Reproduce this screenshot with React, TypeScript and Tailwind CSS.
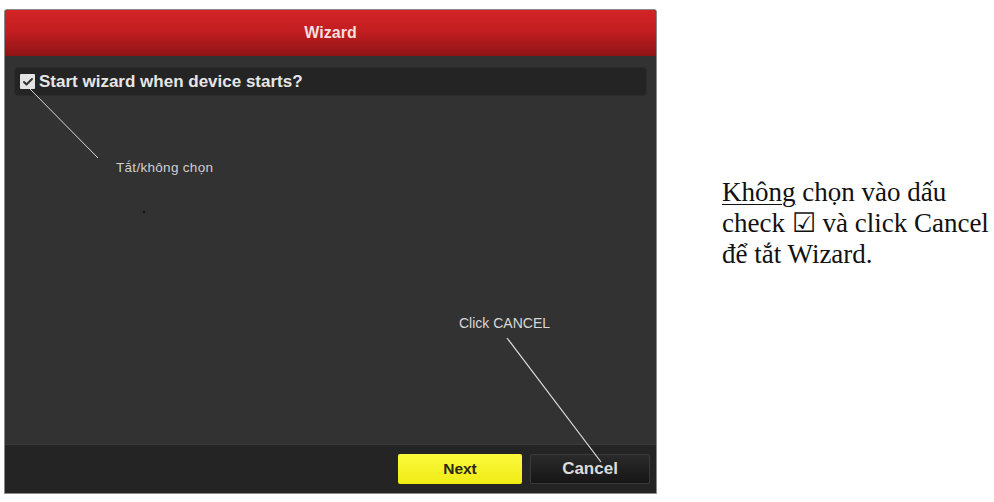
import { Check } from 'lucide-react';

export default function App() {
  return (
    <div className="w-[994px] h-[502px] bg-white flex relative overflow-hidden">
      {/* wizard dialog */}
      <div className="ml-[4px] mt-[9px] w-[653px] h-[485px] flex flex-col bg-[#303030] border border-[#8a8a8a] rounded-t-[3px] relative font-['Liberation_Sans',Arial,sans-serif]">
        <div className="h-[46px] shrink-0 flex items-center justify-center bg-gradient-to-b from-[#d42426] via-[#c01d20] to-[#8e1416] rounded-t-[3px]">
          <span className="text-[16px] font-bold text-[#f4dede]">Wizard</span>
        </div>
        <div className="flex-1 px-[9px] pt-[11px] bg-[#323232]">
          <div className="h-[29px] flex items-center gap-[4px] px-[5px] bg-[#242424] rounded-[4px] border border-[#2c2c2c]">
            <span className="w-[15px] h-[15px] flex items-center justify-center bg-[#e4e4e4] rounded-[1px]">
              <Check size={12} strokeWidth={4} className="text-[#333]" />
            </span>
            <span className="text-[17px] font-bold text-[#e6e6e6]">Start wizard when device starts?</span>
          </div>
        </div>
        <div className="h-[49px] shrink-0 flex items-center justify-end gap-[8px] pr-[6px] bg-[#242424] border-t border-[#3a3a3a]">
          <button className="w-[124px] h-[30px] bg-gradient-to-b from-[#fbf83a] to-[#f0ec10] text-[15.5px] font-bold text-[#2a2a10] rounded-[2px]">
            Next
          </button>
          <button className="w-[120px] h-[30px] bg-gradient-to-b from-[#2a2a2a] to-[#161616] border border-[#3a3a3a] text-[17px] font-bold text-[#dcdcdc] rounded-[2px]">
            Cancel
          </button>
        </div>

        {/* annotations */}
        <svg className="absolute left-0 top-0 pointer-events-none" width="653" height="485">
          <line x1="25" y1="79" x2="93" y2="148" stroke="#d8d8d8" strokeWidth="1" />
          <line x1="502" y1="328" x2="596" y2="452" stroke="#e0e0e0" strokeWidth="1.2" />
          <circle cx="139" cy="202" r="1.2" fill="#111" />
        </svg>
        <span className="absolute left-[111px] top-[148px] text-[13.5px] text-[#d0d0d0] tracking-[0.3px]">Tắt/không chọn</span>
        <span className="absolute left-[454px] top-[303px] text-[14px] text-[#d8d8d8]">Click CANCEL</span>
      </div>

      {/* note */}
      <div className="ml-[65px] mt-[177px] text-[27px] leading-[31px] text-[#111] font-['Liberation_Serif','Times_New_Roman',serif]">
        <div>
          <span className="underline underline-offset-[3px] decoration-1">Không</span> chọn vào dấu
        </div>
        <div>check ☑ và click Cancel</div>
        <div>để tắt Wizard.</div>
      </div>
    </div>
  );
}
